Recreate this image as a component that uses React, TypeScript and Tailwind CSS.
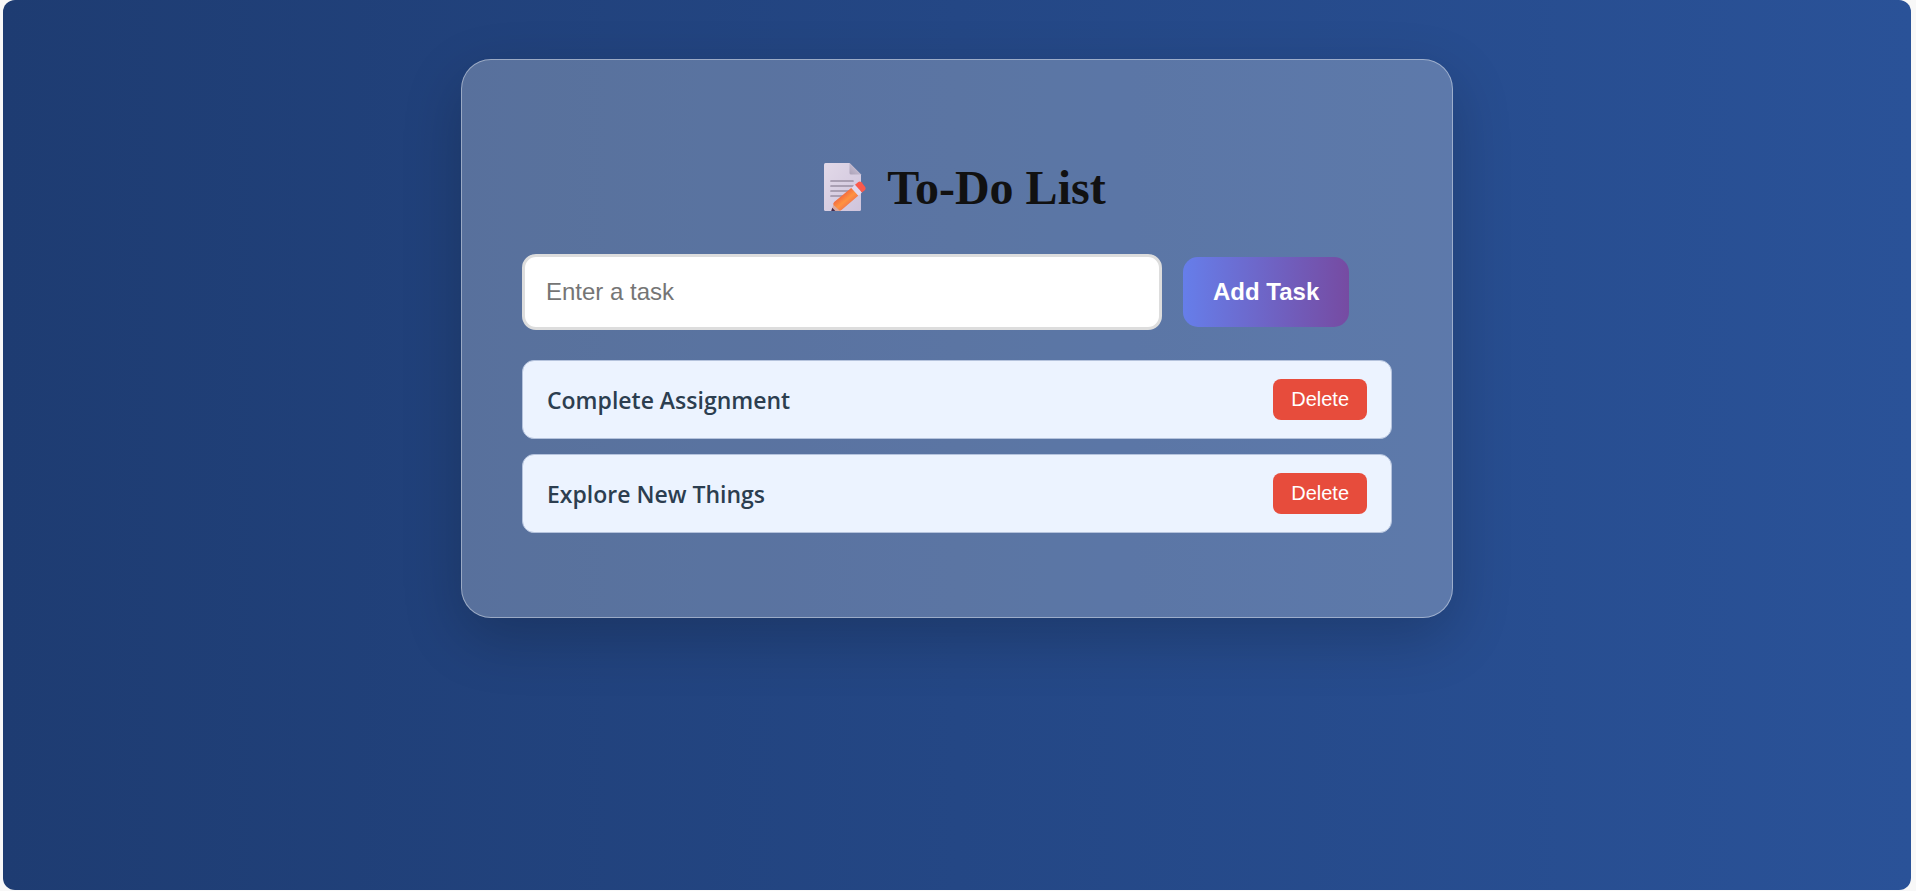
import { useState } from "react";
import type { FormEvent } from "react";

function MemoIcon() {
  return (
    <svg viewBox="0 0 42 51" className="h-[51px] w-[42px] shrink-0" aria-hidden="true">
      <defs>
        <linearGradient id="paper" x1="0" y1="0" x2="1" y2="1">
          <stop offset="0" stopColor="#e2d9e8" />
          <stop offset="1" stopColor="#cfc4dc" />
        </linearGradient>
        <linearGradient id="fold" x1="0" y1="1" x2="1" y2="0">
          <stop offset="0" stopColor="#aba2b8" />
          <stop offset="1" stopColor="#d6ccdf" />
        </linearGradient>
        <linearGradient id="wood" gradientUnits="userSpaceOnUse" x1="16" y1="31" x2="26" y2="43">
          <stop offset="0" stopColor="#ef5f3e" />
          <stop offset="0.55" stopColor="#ff9340" />
          <stop offset="1" stopColor="#ee7050" />
        </linearGradient>
        <clipPath id="memo-area">
          <path d="M0 0H42V48H0Z" />
        </clipPath>
      </defs>
      <g clipPath="url(#memo-area)">
        <path d="M1.500 0H25.500L37 11.500V46.500Q37 48 35.500 48H1.500Q0 48 0 46.500V1.500Q0 0 1.500 0Z" fill="url(#paper)" />
        <path d="M25.500 0V10Q25.500 11.500 27 11.500H37Z" fill="url(#fold)" />
        <path d="M7 18H29M7 23H29M7 28H26M7 33H21" stroke="#998fa3" strokeWidth="1.700" strokeLinecap="round" />
        <path d="M9.500 41.500L17 47.500L11 50L7 49Z" fill="#d9a9a0" />
        <path d="M8.200 44.800L11.800 48.500L7 49Z" fill="#432a4c" />
        <path d="M9.500 42Q8.700 40.500 10.200 39L27.500 24.800L34.500 32.500L17.500 47Q15.500 48 14.500 46.500Z" fill="url(#wood)" />
        <path d="M27.300 24.900L31 21.800L38 29.500L34.400 32.700Z" fill="#e1d8ed" />
        <path d="M31 21.800L34.300 19Q36 17.800 37.500 19.300L41.200 24Q42.200 25.800 40.700 27.200L38 29.500Z" fill="#fb5a4c" />
      </g>
    </svg>
  );
}

export default function App() {
  const [tasks, setTasks] = useState(["Complete Assignment", "Explore New Things"]);
  const [draft, setDraft] = useState("");

  const addTask = (event: FormEvent) => {
    event.preventDefault();
    const text = draft.trim();
    if (!text) return;
    setTasks([...tasks, text]);
    setDraft("");
  };

  return (
    <div className="flex min-h-screen bg-[#f8f8f8] pr-[5px] pb-px pl-[3px] font-['Liberation_Sans',Arial,sans-serif]">
      <main className="flex grow items-start justify-center rounded-xl bg-[linear-gradient(90deg,#1e3c72,#2a5298)] py-[59px]">
        <section className="w-full max-w-[992px] rounded-[30px] border border-white/40 bg-white/25 px-[60px] pt-[100px] pb-[84px] shadow-[0_20px_60px_rgba(0,0,0,0.2)]">
          <h1 className="flex items-center justify-center gap-[21px] pl-4 font-['Liberation_Serif','Times_New_Roman',serif] text-[48px] leading-[56px] font-bold text-[#111]">
            <MemoIcon />
            To-Do List
          </h1>
          <form onSubmit={addTask} className="mt-[38px] flex items-center gap-[21px]">
            <input
              type="text"
              aria-label="Enter a task"
              placeholder="Enter a task"
              value={draft}
              onChange={(event) => setDraft(event.target.value)}
              className="h-[76px] w-full max-w-[640px] rounded-[14px] border-3 border-[#ddd] bg-white px-[21px] text-2xl text-[#222] outline-none placeholder:text-[#757575]"
            />
            <button
              type="submit"
              className="h-[70px] shrink-0 rounded-[15px] bg-[linear-gradient(90deg,#667eea,#764ba2)] px-[30px] text-2xl font-bold text-white"
            >
              Add Task
            </button>
          </form>
          <ul className="mt-[30px] flex flex-col gap-[15px]">
            {tasks.map((task, index) => (
              <li
                key={index}
                className="flex h-[79px] items-center justify-between rounded-xl border border-[#b5c3dd] bg-[#ecf3ff] px-6"
              >
                <span className="pt-0.5 font-['Open_Sans','Noto_Sans',sans-serif] text-[23px] font-semibold text-[#2c3e50]">{task}</span>
                <button
                  type="button"
                  onClick={() => setTasks(tasks.filter((_, i) => i !== index))}
                  className="h-[41px] rounded-lg bg-[#e74c3c] px-[18px] pb-0.5 text-xl text-white"
                >
                  Delete
                </button>
              </li>
            ))}
          </ul>
        </section>
      </main>
    </div>
  );
}
